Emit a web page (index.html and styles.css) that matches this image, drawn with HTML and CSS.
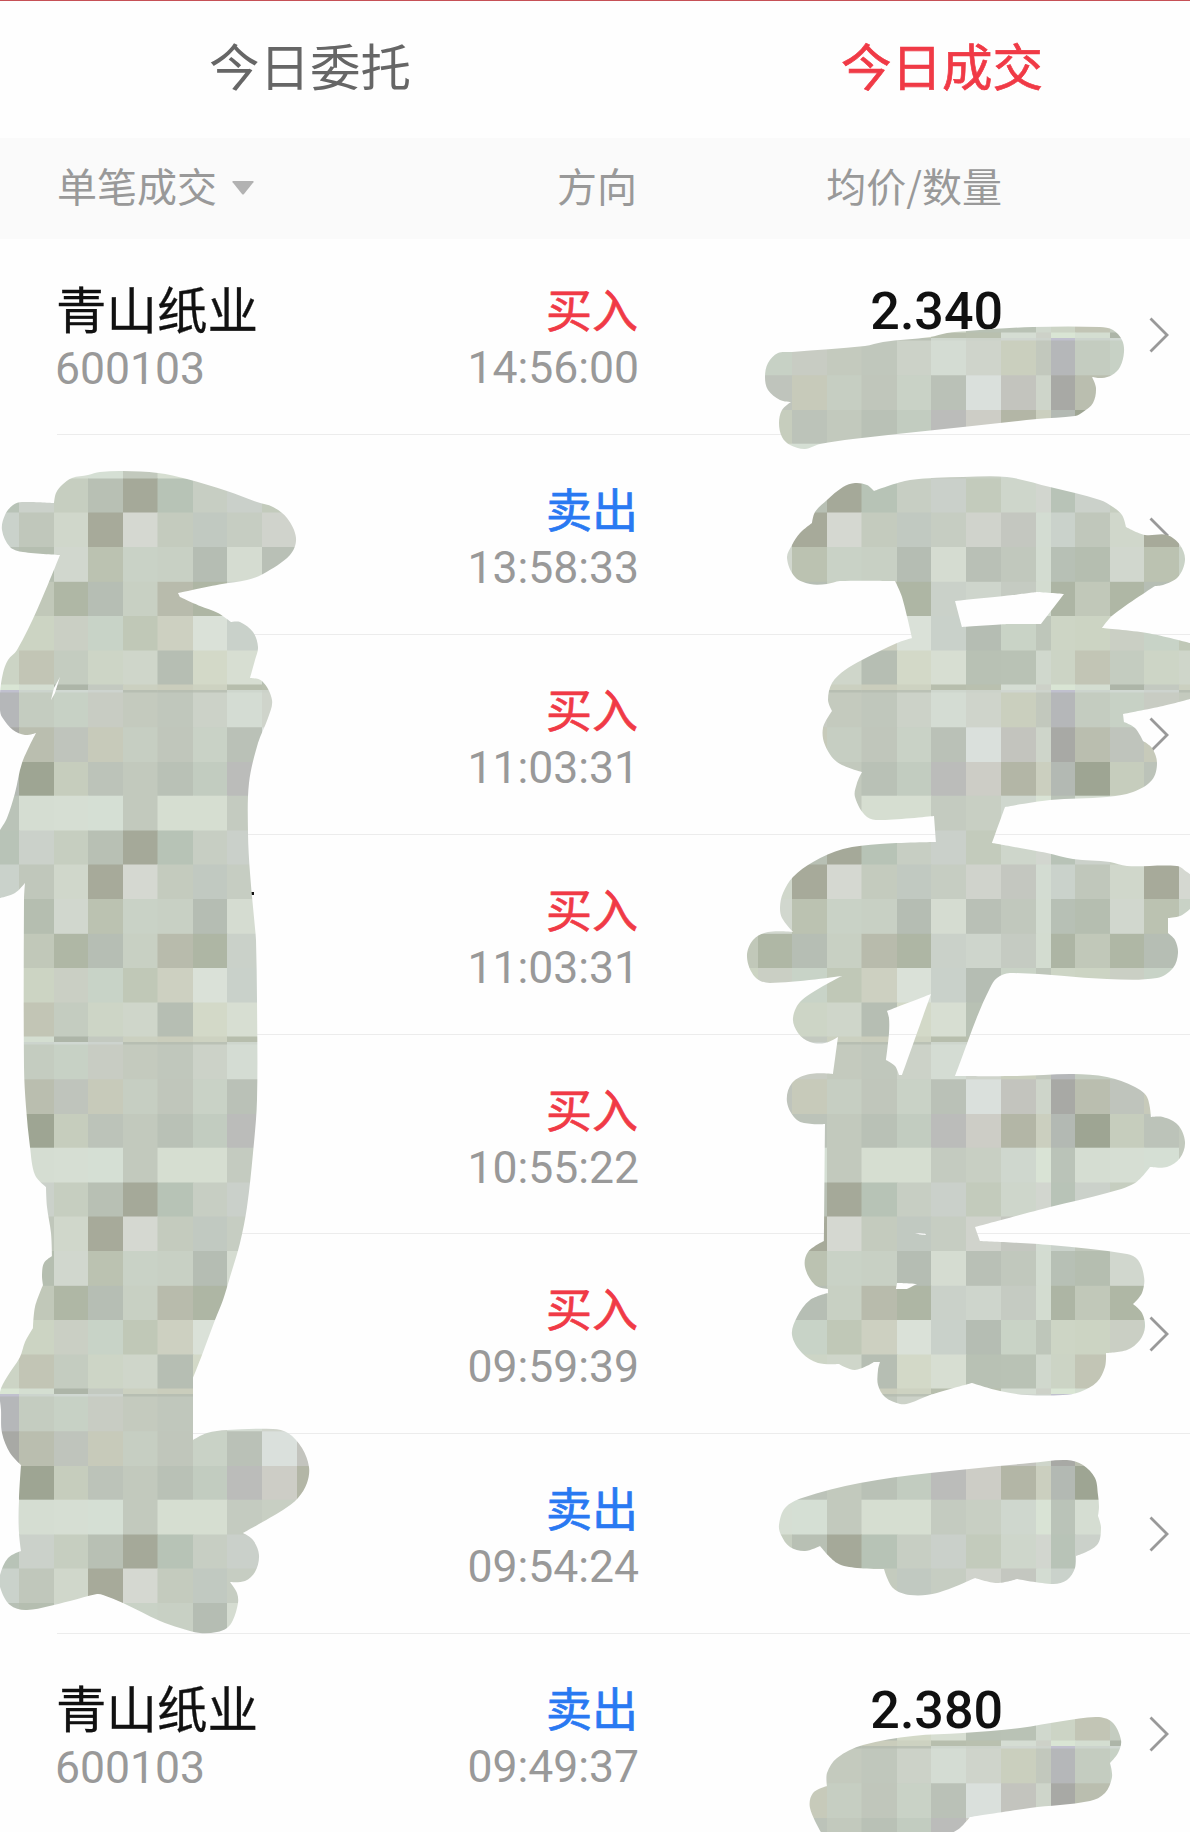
FILE: index.html
```html
<!DOCTYPE html>
<html lang="zh-CN">
<head>
<meta charset="utf-8">
<title>今日成交</title>
<link rel="stylesheet" href="styles.css">
</head>
<body>
<main class="page">
  <nav class="tabs">
    <span class="tab tab-orders">今日委托</span>
    <span class="tab tab-deals">今日成交</span>
  </nav>
  <header class="cols head">
    <span class="head-filter">单笔成交<svg class="caret" viewBox="0 0 22 14"><path d="M1 0H21Q22 0 21.400 1.200L12 13Q11 14 10 13L.6 1.200Q0 0 1 0Z"/></svg></span>
    <span class="side">方向</span>
    <span class="price-head">均价/数量</span>
  </header>
  <section class="list">
    <article class="cols row"><div class="stock"><b class="name">青山纸业</b><span class="code">600103</span></div><div class="side"><b class="buy">买入</b><span class="time">14:56:00</span></div><div class="price">2.340</div><svg class="arrow" viewBox="0 0 20 36"><path d="M1.500 1.500 18 18 1.500 34.500"/></svg></article>
    <article class="cols row"><div class="stock"></div><div class="side"><b class="sell">卖出</b><span class="time">13:58:33</span></div><div class="price"></div><svg class="arrow" viewBox="0 0 20 36"><path d="M1.500 1.500 18 18 1.500 34.500"/></svg></article>
    <article class="cols row"><div class="stock"></div><div class="side"><b class="buy">买入</b><span class="time">11:03:31</span></div><div class="price"></div><svg class="arrow" viewBox="0 0 20 36"><path d="M1.500 1.500 18 18 1.500 34.500"/></svg></article>
    <article class="cols row"><div class="stock"></div><div class="side"><b class="buy">买入</b><span class="time">11:03:31</span></div><div class="price"></div><svg class="arrow" viewBox="0 0 20 36"><path d="M1.500 1.500 18 18 1.500 34.500"/></svg></article>
    <article class="cols row"><div class="stock"></div><div class="side"><b class="buy">买入</b><span class="time">10:55:22</span></div><div class="price"></div><svg class="arrow" viewBox="0 0 20 36"><path d="M1.500 1.500 18 18 1.500 34.500"/></svg></article>
    <article class="cols row"><div class="stock"></div><div class="side"><b class="buy">买入</b><span class="time">09:59:39</span></div><div class="price"></div><svg class="arrow" viewBox="0 0 20 36"><path d="M1.500 1.500 18 18 1.500 34.500"/></svg></article>
    <article class="cols row"><div class="stock"></div><div class="side"><b class="sell">卖出</b><span class="time">09:54:24</span></div><div class="price"></div><svg class="arrow" viewBox="0 0 20 36"><path d="M1.500 1.500 18 18 1.500 34.500"/></svg></article>
    <article class="cols row"><div class="stock"><b class="name">青山纸业</b><span class="code">600103</span></div><div class="side"><b class="sell">卖出</b><span class="time">09:49:37</span></div><div class="price">2.380</div><svg class="arrow" viewBox="0 0 20 36"><path d="M1.500 1.500 18 18 1.500 34.500"/></svg></article>
  </section>
  <svg class="redaction" viewBox="0 0 1190 1832" aria-hidden="true">
    <defs><pattern id="mosaic" x="-5" y="338" width="352" height="352" patternUnits="userSpaceOnUse"></pattern></defs>
    <rect x="251" y="892" width="3" height="3" fill="#111"/>
    <path id="strokes" fill="url(#mosaic)" fill-rule="evenodd"/>
  </svg>
</main>
<script src="mosaic.js"></script>
</body>
</html>
```
FILE: styles.css
```css
* { box-sizing: border-box; }
body { margin: 0; background: #fefefe; font-family: "Noto Sans CJK SC", sans-serif; }
.page { position: relative; width: 1190px; height: 1832px; overflow: hidden; }
.tabs { display: flex; height: 138px; padding-left: 62px; border-top: 1px solid #c65056; font-size: 50.500px; line-height: 127px; text-align: center; }
.tab { width: 496px; }
.tab-orders { color: #666; }
.tab-deals { margin-left: 136px; color: #f03a46; -webkit-text-stroke: .7px #f03a46; }
.cols { display: grid; grid-template-columns: 320px 260px 365px 1fr; margin-left: 57px; }
.head { height: 101px; margin-left: 0; padding-left: 57px; background: #fafafa; color: #999; font-size: 40px; line-height: 95px; }
.head-filter { display: flex; height: 95px; align-items: center; gap: 15px; }
.caret { width: 22px; height: 14px; margin-top: 5px; fill: #b2b2b2; }
.price-head { text-align: right; }
.row { height: 200px; border-bottom: 1px solid #ececec; }
.row:first-child { height: 196px; }
.row:nth-child(5) { height: 199px; }
.row:first-child > * { margin-top: -4px; }
.stock, .side { display: flex; flex-direction: column; }
.side { text-align: right; }
.stock, .row .side { padding-top: 42px; }
.row .side { margin-right: -1px; }
b { font-weight: 400; height: 63px; line-height: 60px; }
.name { margin-left: -1px; font-size: 50.500px; color: #111; -webkit-text-stroke: .3px #111; }
.buy, .sell { font-size: 46px; }
.buy { color: #f03a46; -webkit-text-stroke: .7px #f03a46; }
.sell { color: #2979f2; -webkit-text-stroke: .7px #2979f2; }
.code, .time { color: #999; font-family: Roboto, sans-serif; font-size: 44.500px; line-height: 56px; }
.code { margin: 1px 0 0 -2px; }
.time { margin-right: -1px; }
.price { padding-top: 47px; margin-right: -1px; text-align: right; font-family: Roboto, sans-serif; font-weight: 500; font-size: 52px; line-height: 60px; color: #111; }
.arrow { width: 20px; height: 36px; margin: 82px 0 0 147px; fill: none; stroke: #999; stroke-width: 2.800; }
.row:first-child .arrow { margin-top: 78px; }
.redaction { position: absolute; left: 0; top: 0; width: 1190px; height: 1832px; }
```
FILE: mosaic.js
```js
// Column and row boundaries of one 352px mosaic tile.
const xs = [0, 24, 59, 93, 128, 162.5, 198, 232, 267, 302, 337, 352];
const ys = [0, 37.3, 72, 105.7, 140.5, 174.500, 209, 243.800, 278, 312.500, 346.500, 352];
const colors = [
  'b5b7b9 c4ccc0 c7d1c5 c8ccc3 c4cabe c0c7bc ccd2c8 d4dcd3 cfd4cb cacfbe c2c8bd',
  'a8a9a5 babeaf bfc4bc c7caba c6cec2 c0c6bb c9d2c6 bac1b7 dae0dc c3c4be ced5ca',
  'b3b9b3 9ea593 c6cdbd bcc3b9 c2c9bd b9c1b6 c2ccc0 bbbcba cdcdc6 b3b6a6 cbcfbf',
  'bac3b8 d5ddd2 d6ded3 d5dfd4 c2c9bd d6ded1 d6ded1 c4cbc0 c8cfc3 cfd7ce d9e3d5',
  'b8c3b7 cbd1ca c6cec0 b8c0b4 a5a999 b7c3b6 c7cec3 cad0ca c3cbbc ced6cb d2d6cf',
  'cad2cb c0c7bb d0d7cb a7aa9a d5d8d1 c4cbbe c1c9c1 c6cdc2 d0d3cc c4c7c0 d3dcd2',
  'b7c0b5 b5beb0 d1d7ce bbc2b1 c9d2c6 c8d0c4 b5bdb3 d5dcd1 b9c0b6 c1c8bd d3dcd1',
  'adb5a4 c1c8b9 afb7a5 b6beb4 c8d0c3 b8bbac aeb6a4 cad1c9 ced5cc c5cbc2 d3dcd0',
  'cdd5c5 ccd4c3 cacfc4 c8d3c7 c0c8b7 cdd0c1 dae1d8 c9d1ca b5bdb3 c9d3c6 bec6ba',
  'ccd4c5 c2c5b5 c4ccc0 cdd5c6 cfd6ca b6beb3 d3d9c8 d7ded2 b8c1b4 b9c2b5 d0d8cd',
  'd9e5d4 d4ded1 adb5a8 c3c9c0 cbd0c0 cacdbc cdd2c1 b7bead b9c0af d5ddd3 cdd1c8'
].map(r => r.split(' '));
const seam = 'c0c0ce ccd4cd d0d8d2 cdd3ce b7beb2 b7beb2 bac1b5 ced6cd ccd2c9 d0d6d0 cdd3cc'.split(' ');

const tile = document.getElementById('mosaic');
function cell(x, y, w, h, fill) {
  const r = document.createElementNS('http://www.w3.org/2000/svg', 'rect');
  Object.entries({ x, y, width: w, height: h, fill: '#' + fill }).forEach(([k, v]) => r.setAttribute(k, v));
  tile.appendChild(r);
}
cell(0, 0, 352, 352, 'c6cdc1');
colors.forEach((row, j) => row.forEach((c, i) =>
  cell(xs[i], ys[j], Math.min(xs[i + 1] + .5, 352) - xs[i], Math.min(ys[j + 1] + .5, 352) - ys[j], c)));
seam.forEach((c, i) => cell(xs[i], 0, xs[i + 1] - xs[i], 2.5, c));

// Outline points of the marker strokes; "!" marks a sharp corner.
const outlines = [
  `54,503! 56,493 62,485 72,478 88,475 100,472 123,471 158,473 187,479 227,491 257,502 273,507 287,518 296,538 290,555 263,574 247,580 222,584 178,593! 180,597! 200,606 218,613 231,622! 240,622 253,632 258,647 255,660 250,678! 262,681 272,700 268,718 258,743 249,783 248,833 250,873 255,928 256,940 257,1000 257,1100 253,1153 247,1207 240,1243 230,1277 223,1300 215,1320 202,1355 193,1378! 193,1440! 207,1433 227,1430 273,1429 288,1433 302,1448 309,1467 307,1483 298,1498 283,1510 243,1533! 253,1540 259,1555 255,1572 245,1581 230,1582! 237,1593 238,1603 233,1620 227,1628 217,1632 200,1633 180,1628 160,1621 123,1603 103,1595 97,1594 70,1601 27,1610 10,1605 0,1587 0,1575 8,1558 21,1551! 19,1533 19,1500 21,1465! 10,1453 2,1433 1,1410 0,1392 7,1377 20,1357 25,1342 33,1328! 35,1307 43,1285! 42,1275 44,1263 52,1256! 51,1233 47,1207 46,1187! 35,1175 30,1147 26,1107 24,1067 24,900 25,883! 15,893 0,898! 0,830! 7,818 15,793 22,763 36,733! 25,735 13,730 2,717 0,710 0,693 3,673 8,660 17,650 37,610 60,555! 23,552 10,547 2,530 5,515 13,505 22,502`,
  `60,677! 54,688! 51,700! 55,693!`,
  `765,377 768,363 778,353 792,352 865,346 883,342 930,337 947,333 967,331 1033,327 1100,327 1113,330 1122,340 1124,352 1120,367 1112,375 1102,378 1092,377! 1096,388 1093,403 1083,412 1075,416 1037,419 963,427 897,434 853,439 820,444 805,449 790,445 782,437 779,423 782,410 791,402! 780,400 768,390`,
  `787,558 792,545 800,533 812,523! 815,512 827,500 843,487 855,483 867,485 874,491! 910,480 963,477 1007,477 1050,487 1100,500 1113,507 1122,515 1126,527! 1145,535 1167,535 1180,545 1185,560 1178,577 1163,585 1155,586! 1113,615 1102,628! 1147,633 1190,643! 1190,699! 1163,706 1123,714! 1124,722! 1135,728 1143,741! 1152,748 1157,763 1152,780 1133,792 1107,797 1050,800 1005,807! 992,843! 1047,853 1073,859 1110,862 1127,866 1177,866 1187,872 1191,875! 1191,908! 1180,916 1168,918! 1168,933! 1175,940 1178,953 1173,968 1157,978 1107,979 1010,973 997,978 990,988 977,1017 961,1060 955,1076! 1017,1076 1073,1074 1107,1077 1135,1087 1147,1097 1151,1117! 1163,1117 1178,1125 1185,1142 1180,1158 1167,1167 1150,1167! 1135,1183 1107,1193 1050,1207 975,1227! 980,1241! 1050,1245 1127,1254 1138,1260 1144,1277 1142,1293 1133,1304! 1142,1313 1145,1327 1140,1340 1127,1350 1106,1353! 1105,1367 1097,1382 1080,1392 1063,1395 1027,1395 1000,1391 972,1383! 930,1395 910,1403 900,1404 885,1397 878,1385 878,1370 880,1362! 874,1362! 855,1370 839,1364! 818,1363 802,1353 792,1335 797,1317 810,1300 828,1293! 828,1289! 815,1285 805,1267 808,1252 824,1241! 825,1124! 812,1124 797,1120 787,1102 792,1083 810,1074 833,1074! 838,1037! 825,1043 810,1042 798,1033 793,1018 802,1000 842,976! 770,983 755,977 747,957 753,940 768,932 793,932! 782,918 780,907 783,893 793,877 813,862 843,849 880,844 936,842! 934,816! 882,820 867,817 855,797 857,783 862,772! 837,762 825,745 823,728 832,711! 828,700 832,683 845,670 862,660 897,643 912,638! 902,597 895,581! 840,581 827,584 810,584 795,577`,
  `955,601! 1013,595! 1037,592! 1064,594! 1041,624! 1007,624! 962,627!`,
  `887,1011! 931,994! 902,1075! 899,1075! 895,1066 886,1060! 889,1033 889,1018`,
  `897,1283! 917,1284! 907,1289! 896,1289!`,
  `915,1233! 925,1233.500! 926,1235! 920,1234.500!`,
  `779,1525 785,1508 802,1498 860,1483 930,1473 1030,1463 1067,1460 1083,1465 1095,1478 1098,1495 1099,1507 1098,1516! 1101,1528 1097,1545 1076,1556! 1075,1568 1067,1580 1053,1584 1017,1579! 997,1583 975,1578! 937,1593 910,1595 893,1588 884,1569! 857,1568 837,1563 820,1546! 805,1551 790,1547 781,1535`,
  `810,1808 813,1793 827,1786! 827,1773 837,1758 863,1745 913,1736 963,1733 1020,1728 1063,1721 1097,1717 1112,1722 1121,1740 1118,1753 1110,1763! 1112,1777 1105,1793 1090,1801 1030,1808 970,1817! 960,1828 950,1834! 822,1834!`
];

function smooth(text) {
  const p = text.trim().split(/\s+/).map(t => {
    const [x, y] = t.replace('!', '').split(',').map(Number);
    return { x, y, sharp: t.endsWith('!') };
  });
  const n = p.length;
  const dist = (a, b) => Math.hypot(a.x - b.x, a.y - b.y);
  // Tangent handles are scaled to the length of their own segment.
  const handle = (i, len, dir) => {
    const c = p[i], a = p[(i + n - 1) % n], b = p[(i + 1) % n];
    if (c.sharp) return [c.x, c.y];
    const k = dir * len / (3 * (dist(a, b) || 1));
    return [c.x + (b.x - a.x) * k, c.y + (b.y - a.y) * k];
  };
  let d = `M${p[0].x} ${p[0].y}`;
  for (let i = 0; i < n; i++) {
    const j = (i + 1) % n, len = dist(p[i], p[j]);
    d += `C${handle(i, len, 1)} ${handle(j, len, -1)} ${p[j].x},${p[j].y}`;
  }
  return d + 'Z';
}
document.getElementById('strokes').setAttribute('d', outlines.map(smooth).join(''));
```
